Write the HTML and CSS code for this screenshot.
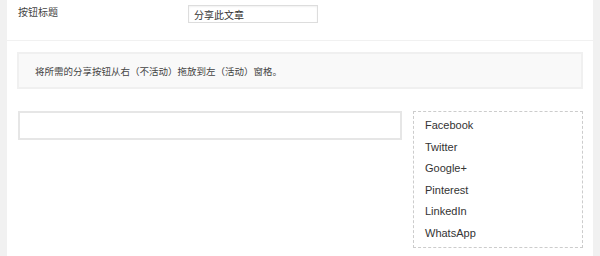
FILE: index.html
```html
<!DOCTYPE html>
<html>
<head>
<meta charset="utf-8">
<link rel="stylesheet" href="styles.css">
</head>
<body>
<div class="panel">
  <div class="field-row">
    <label class="field-label">按钮标题</label>
    <input class="field-input" type="text" value="分享此文章">
  </div>
  <div class="content">
    <div class="notice">将所需的分享按钮从右（不活动）拖放到左（活动）窗格。</div>
    <div class="columns">
      <div class="active-zone"></div>
      <ul class="inactive-zone">
        <li>Facebook</li>
        <li>Twitter</li>
        <li>Google+</li>
        <li>Pinterest</li>
        <li>LinkedIn</li>
        <li>WhatsApp</li>
      </ul>
    </div>
  </div>
</div>
</body>
</html>
```

FILE: styles.css
```css
html, body {
  margin: 0;
  padding: 0;
  background: #f1f1f1;
  height: 256px;
  overflow: hidden;
}
body {
  font-family: "Liberation Sans", "Noto Sans CJK SC", sans-serif;
  color: #444;
}
.panel {
  margin: 0 7px;
  background: #fff;
  height: 256px;
}
.field-row {
  display: flex;
  align-items: flex-start;
  height: 41px;
  border-bottom: 1px solid #f1f1f1;
  box-sizing: border-box;
  padding: 5px 0 0 11px;
}
.field-label {
  width: 170px;
  font-size: 10px;
  line-height: 14px;
  padding-top: 1px;
  color: #444;
}
.field-input {
  width: 130px;
  height: 18px;
  box-sizing: border-box;
  border: 1px solid #ddd;
  box-shadow: inset 0 1px 2px rgba(0,0,0,0.06);
  padding: 0 5px;
  margin: 0;
  font-family: "Liberation Sans", "Noto Sans CJK SC", sans-serif;
  font-size: 10px;
  color: #333;
  outline: none;
}
.content {
  padding: 11px 10px 0 10px;
}
.notice {
  border: 2px solid #f0f0f0;
  background: #f9f9f9;
  height: 37px;
  box-sizing: border-box;
  padding: 0 0 0 16px;
  display: flex;
  align-items: center;
  font-size: 9.5px;
  color: #444;
}
.columns {
  display: flex;
  gap: 11px;
  margin-top: 22px;
}
.active-zone {
  width: 384px;
  height: 29px;
  box-sizing: border-box;
  border: 2px solid #e6e6e6;
  margin-left: 1px;
}
.inactive-zone {
  list-style: none;
  margin: 0;
  width: 170px;
  box-sizing: border-box;
  border: 1px dashed #ccc;
  padding: 3px 0 2px 11px;
  font-size: 11px;
  line-height: 21.6px;
  color: #333;
}
```
